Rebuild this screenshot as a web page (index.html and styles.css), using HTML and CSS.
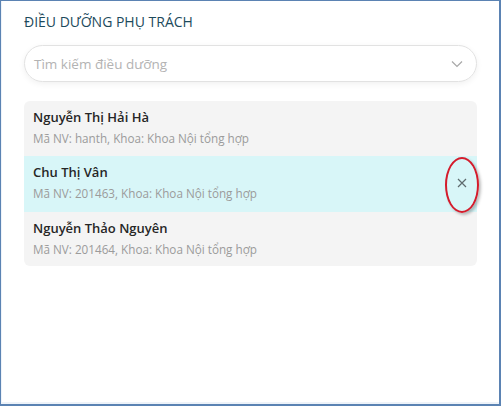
FILE: index.html
```html
<!DOCTYPE html>
<html lang="vi">
<head>
<meta charset="utf-8">
<link rel="stylesheet" href="styles.css">
</head>
<body>
<div class="frame">
  <div class="panel">
    <h2 class="title">ĐIỀU DƯỠNG PHỤ TRÁCH</h2>
    <div class="search">
      <span class="placeholder">Tìm kiếm điều dưỡng</span>
      <svg class="chev" width="12" height="8" viewBox="0 0 12 8"><path d="M1 1.5 L6 6.5 L11 1.5" fill="none" stroke="#a8a8a8" stroke-width="1.2"/></svg>
    </div>
    <div class="list">
      <div class="item">
        <div class="name">Nguyễn Thị Hải Hà</div>
        <div class="meta">Mã NV: hanth, Khoa: Khoa Nội tổng hợp</div>
      </div>
      <div class="item active">
        <div class="name">Chu Thị Vân</div>
        <div class="meta">Mã NV: 201463, Khoa: Khoa Nội tổng hợp</div>
        <svg class="close" width="10" height="10" viewBox="0 0 10 10"><path d="M1 1 L9 9 M9 1 L1 9" stroke="#5f6b6e" stroke-width="1.2"/></svg>
        <span class="mark"></span>
      </div>
      <div class="item">
        <div class="name">Nguyễn Thảo Nguyên</div>
        <div class="meta">Mã NV: 201464, Khoa: Khoa Nội tổng hợp</div>
      </div>
    </div>
  </div>
</div>
</body>
</html>
```

FILE: styles.css
```css
* { box-sizing: border-box; }
html, body { margin: 0; padding: 0; }
body {
  width: 501px;
  height: 406px;
  background: #ffffff;
  font-family: "Open Sans", "Noto Sans", sans-serif;
}
.frame {
  width: 501px;
  height: 406px;
  border-left: 1px solid #5b83b3;
  border-top: 1px solid #5b83b3;
  border-right: 2px solid #5b83b3;
  border-bottom: 2px solid #5b83b3;
  background: #eef3f9;
  padding: 0 0 2px 1px;
}
.panel {
  background: #ffffff;
  height: 100%;
  padding: 11px 22px 0 22px;
}
.title {
  margin: 0;
  font-size: 14px;
  font-weight: 500;
  color: #1d4a5c;
  line-height: 20px;
}
.search {
  margin-top: 13px;
  height: 37px;
  border: 1px solid #e2e2e2;
  border-radius: 19px;
  box-shadow: 0 2px 6px rgba(0,0,0,0.06);
  display: flex;
  align-items: center;
  justify-content: space-between;
  padding: 0 10px 0 9px;
}
.placeholder {
  font-size: 13.5px;
  color: #b3b3b3;
}
.chev { margin-right: 3px; margin-top: 1px; }
.list {
  margin-top: 19px;
  border-radius: 6px;
  background: #f4f4f4;
}
.item {
  position: relative;
  height: 55px;
  padding: 6px 9px 0 9px;
}
.item:first-child { border-radius: 6px 6px 0 0; }
.item:last-child { border-radius: 0 0 6px 6px; height: 54px; }
.item.active { background: #d8f6f8; height: 56px; }
.name {
  font-size: 13px;
  font-weight: 600;
  color: #262626;
  line-height: 20px;
}
.meta {
  margin-top: 2px;
  font-size: 11.7px;
  color: #9b9b9b;
  line-height: 18px;
}
.close {
  position: absolute;
  right: 10px;
  top: 22px;
}
.mark {
  position: absolute;
  right: -2px;
  top: 1px;
  width: 34px;
  height: 56px;
  border: 2px solid #d41c2c;
  border-radius: 50%;
  box-shadow: 2px 2px 3px rgba(0,0,0,0.25);
}
```
